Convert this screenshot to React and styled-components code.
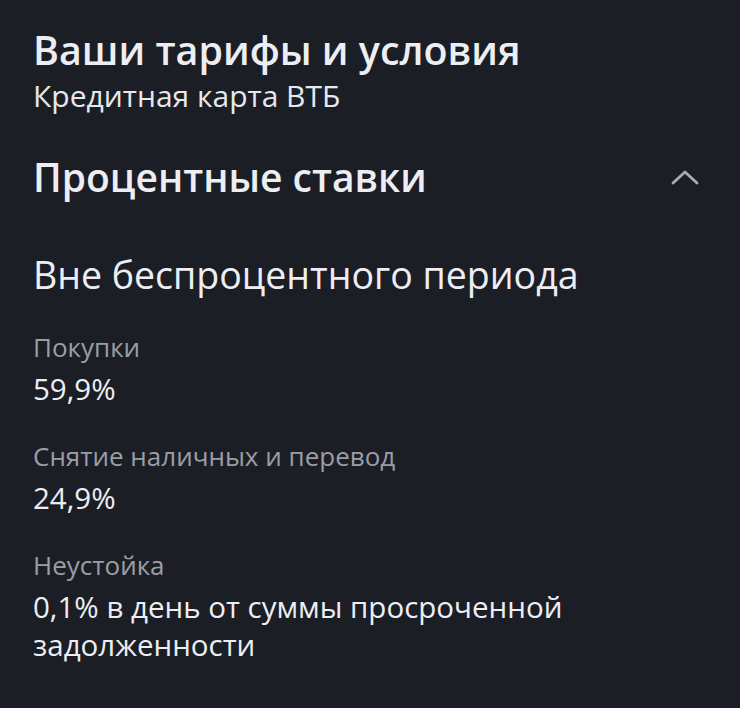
import React from "react";
import styled, { createGlobalStyle } from "styled-components";

const Global = createGlobalStyle`
  html, body { margin: 0; padding: 0; background: #1c1e26; }
  body { font-family: "Open Sans", "Noto Sans", sans-serif; -webkit-font-smoothing: antialiased; }
`;

const Page = styled.div`
  width: 740px;
  min-height: 708px;
  box-sizing: border-box;
  background: #1c1e26;
  padding: 24px 40px 0 33px;
  color: #eceef3;
`;

const Header = styled.header`
  display: flex;
  flex-direction: column;
`;

const Title = styled.h1`
  margin: 0;
  font-size: 39.4px;
  line-height: 52px;
  font-weight: 600;
  color: #eceef3;
`;

const Subtitle = styled.div`
  font-size: 30px;
  line-height: 40px;
  font-weight: 400;
  color: #e6e8ee;
`;

const SectionHead = styled.div`
  display: flex;
  align-items: center;
  justify-content: space-between;
  margin-top: 36px;
`;

const SectionTitle = styled.h2`
  margin: 0;
  font-size: 39px;
  line-height: 50px;
  font-weight: 600;
  color: #eceef3;
`;

const Chevron = styled.svg`
  width: 30px;
  height: 18px;
  flex: none;
`;

const Group = styled.h3`
  margin: 50px 0 0;
  font-size: 37.5px;
  line-height: 46px;
  font-weight: 400;
  color: #eceef3;
`;

const List = styled.dl`
  margin: 32px 0 0;
  display: flex;
  flex-direction: column;
  gap: 31px;
`;

const Item = styled.div`
  display: flex;
  flex-direction: column;
  gap: 6px;
`;

const Label = styled.dt`
  font-size: 26px;
  line-height: 34px;
  color: #9b9da5;
`;

const Value = styled.dd`
  margin: 0;
  font-size: 29.5px;
  line-height: 38px;
  color: #eceef3;
`;

const rates = [
  { label: "Покупки", value: "59,9%" },
  { label: "Снятие наличных и перевод", value: "24,9%" },
  { label: "Неустойка", value: "0,1% в день от суммы просроченной задолженности" },
];

export default function App() {
  return (
    <>
      <Global />
      <Page>
        <Header>
          <Title>Ваши тарифы и условия</Title>
          <Subtitle>Кредитная карта ВТБ</Subtitle>
        </Header>
        <SectionHead>
          <SectionTitle>Процентные ставки</SectionTitle>
          <Chevron viewBox="0 0 30 18" fill="none">
            <path d="M3 15 L15 4 L27 15" stroke="#a9abb2" strokeWidth="2.8" strokeLinecap="round" strokeLinejoin="round" />
          </Chevron>
        </SectionHead>
        <Group>Вне беспроцентного периода</Group>
        <List>
          {rates.map((r) => (
            <Item key={r.label}>
              <Label>{r.label}</Label>
              <Value>{r.value}</Value>
            </Item>
          ))}
        </List>
      </Page>
    </>
  );
}
